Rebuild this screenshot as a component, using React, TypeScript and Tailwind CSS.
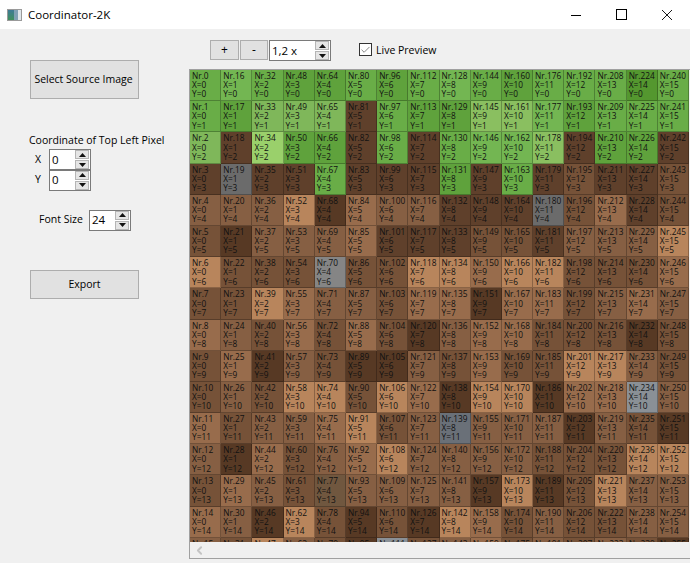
import { Check, ChevronLeft } from "lucide-react";

const uiFont = "font-['Open_Sans',sans-serif]";

const swatches: Record<string, string> = {
  E: "bg-[#54972f]",
  D: "bg-[#5fa23c]",
  G: "bg-[#69ad47]",
  H: "bg-[#73b652]",
  L: "bg-[#7fb75a]",
  M: "bg-[#8abf60]",
  V: "bg-[#9ad06b]",
  a: "bg-[#573924]",
  b: "bg-[#5f402b]",
  c: "bg-[#765238]",
  d: "bg-[#865f43]",
  e: "bg-[#986c4c]",
  f: "bg-[#b8855c]",
  h: "bg-[#70573f]",
  w: "bg-[#6a7078]",
  x: "bg-[#6b6b6b]",
  y: "bg-[#858585]",
  z: "bg-[#8a9096]",
};

// one string per row, one letter per column
const rows = [
  "GHGDDGDGHGDGGGEG",
  "GDLLLbGDDMMHDGGG",
  "LbVDDbGbGHHMbDDb",
  "bxbbGbbbDbGbcbbc",
  "dddfaeddbbbxcebc",
  "cadddebbbccbdddf",
  "fcccyccffeffccce",
  "ccfeddceeaeecded",
  "edcececadeeccca" + "c",
  "ceadcaadceccffdc",
  "cdcffcfeaffaeezd",
  "ecddefcdwdddadca",
  "daecdefddddcccff",
  "cedchddddafacfdd",
  "edafcacafecdccdd",
  "dcfdcazcdecdcdca",
];

function Cell({ nr, x, y, color }: { nr: number; x: number; y: number; color: string }) {
  return (
    <div className={`${color} h-[31.2px] border-r border-b border-black/25 pl-[2px] pt-[1px] text-[8.3px] leading-[9.2px] text-[#111] overflow-hidden whitespace-nowrap`}>
      <div>Nr.{nr}</div>
      <div>X={x}</div>
      <div>Y={y}</div>
    </div>
  );
}

function SpinButtons() {
  return (
    <div className="flex flex-col gap-[1px] w-[14px] shrink-0">
      <div className="h-[9px] bg-[#e5e5e5] border border-[#b5b5b5] flex items-center justify-center">
        <svg width="7" height="4" viewBox="0 0 7 4"><path d="M3.5 0L7 4H0z" fill="#111" /></svg>
      </div>
      <div className="h-[9px] bg-[#e5e5e5] border border-[#b5b5b5] flex items-center justify-center">
        <svg width="7" height="4" viewBox="0 0 7 4"><path d="M0 0h7L3.5 4z" fill="#111" /></svg>
      </div>
    </div>
  );
}

function SpinBox({ value, className }: { value: string; className: string }) {
  return (
    <div className={`${className} h-[21px] bg-white border border-[#7a7a7a] flex items-center justify-between pl-[2px] pr-[1px] text-[11.5px] text-black`}>
      <span>{value}</span>
      <SpinButtons />
    </div>
  );
}

function ActionButton({ label, className }: { label: string; className: string }) {
  return (
    <div className={`${className} bg-[#e1e1e1] border border-[#adadad] flex items-center justify-center text-[10.5px] whitespace-nowrap text-black`}>
      {label}
    </div>
  );
}

export default function App() {
  return (
    <div className={`${uiFont} w-[690px] h-[563px] bg-[#f0f0f0] flex flex-col overflow-hidden text-black`}>
      <div className="h-[29px] bg-white flex items-center shrink-0">
        <div className="ml-[7px] w-[15px] h-[12px] border border-[#9a9a9a] bg-[#dfe6ea] flex">
          <div className="w-[6px] bg-gradient-to-b from-[#3e7a96] to-[#3f8f5a]" />
          <div className="w-[4px] bg-[#7fa0b4]" />
        </div>
        <span className="ml-[6px] text-[11.5px]">Coordinator-2K</span>
        <div className="ml-auto mr-[18px] flex items-center gap-[35px]">
          <svg width="10" height="10" viewBox="0 0 10 10"><path d="M0 5.5h10" stroke="#000" /></svg>
          <svg width="11" height="11" viewBox="0 0 11 11"><rect x="0.5" y="0.5" width="10" height="10" fill="none" stroke="#000" /></svg>
          <svg width="10" height="10" viewBox="0 0 10 10"><path d="M0 0l10 10M10 0L0 10" stroke="#000" strokeWidth="0.9" /></svg>
        </div>
      </div>

      <div className="flex flex-1 min-h-0">
        <div className="w-[189px] shrink-0 flex flex-col pt-[31px] pl-[30px] text-[10.5px]">
          <ActionButton label="Select Source Image" className="w-[109px] h-[39px] pt-[1px] pr-[2px]" />
          <div className="mt-[33px] -ml-[1px] h-[16px] leading-[16px] whitespace-nowrap">Coordinate of Top Left Pixel</div>
          <div className="mt-[1px] flex items-center h-[21px]">
            <span className="w-[19px] pl-[5px]">X</span>
            <SpinBox value="0" className="w-[42px]" />
          </div>
          <div className="flex items-center h-[20px]">
            <span className="w-[19px] pl-[5px]">Y</span>
            <SpinBox value="0" className="w-[42px]" />
          </div>
          <div className="mt-[19px] flex items-center h-[22px]">
            <span className="w-[59px] pl-[9px] whitespace-nowrap">Font Size</span>
            <SpinBox value="24" className="w-[42px]" />
          </div>
          <ActionButton label="Export" className="mt-[39px] w-[109px] h-[29px] pt-[1px]" />
        </div>

        <div className="flex-1 min-w-0 flex flex-col">
          <div className="h-[40px] shrink-0 flex items-start pt-[11px] pl-[21px]">
            <ActionButton label="+" className="w-[29px] h-[20px] !text-[12px]" />
            <ActionButton label="-" className="ml-[1px] w-[28px] h-[20px] !text-[12px]" />
            <SpinBox value="1,2 x" className="ml-[1px] w-[62px]" />
            <div className="ml-[28px] mt-[3px] w-[13px] h-[13px] bg-white border border-[#333] flex items-center justify-center">
              <Check size={12} strokeWidth={1.4} className="text-[#444]" />
            </div>
            <span className="ml-[4px] h-[20px] leading-[20px] text-[10.5px] whitespace-nowrap">Live Preview</span>
          </div>

          <div className="h-[490px] border-l border-b border-t border-[#a0a0a0] flex flex-col">
            <div className="h-[472px] overflow-hidden">
              <div className="grid grid-cols-[repeat(16,31.2px)] w-[499.2px]">
                {rows.flatMap((row, y) =>
                  row.split("").map((key, x) => (
                    <Cell key={`${x}-${y}`} nr={x * 16 + y} x={x} y={y} color={swatches[key]} />
                  )),
                )}
              </div>
            </div>
            <div className="flex-1 flex items-center pl-[3px]">
              <ChevronLeft size={13} strokeWidth={3.5} className="text-[#c4c4c4]" />
            </div>
          </div>
        </div>
      </div>
    </div>
  );
}
